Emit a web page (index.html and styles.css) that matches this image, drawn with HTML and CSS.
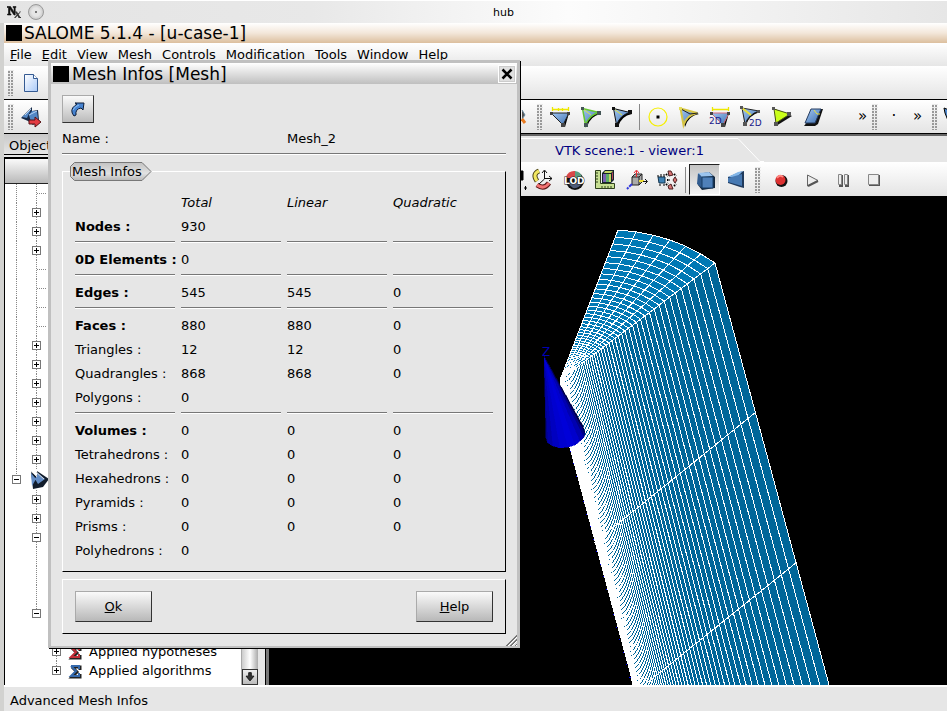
FILE: index.html
```html
<!DOCTYPE html>
<html lang="en">
<head>
<meta charset="utf-8">
<title>SALOME 5.1.4</title>
<link rel="stylesheet" href="styles.css">
</head>
<body>
<div class="session">
  <header class="session-bar">
    <svg class="nx" viewBox="0 0 14 14" aria-hidden="true"><path d="M0 1.5H3.5L7 7V2.5H6V1.5H9V2.5H8.200V10H7L3 4V9H4V10H0.500V9H1.500V2.500H0Z" fill="#111" stroke="#111" stroke-width=".6"/><path d="M7.500 6.500H10L11 8.500L12.500 7.500V6.500H14L11.700 9.500L13.200 12H14V13H11.500L10.500 10.800L8.500 13H7L9.700 9.800L8.500 7.500H7.500Z" fill="#333"/></svg>
    <span class="orb"></span>
    <span class="session-name">hub</span>
  </header>
  <main class="app">
    <h1 class="app-title"><span class="black-box"></span>SALOME 5.1.4 - [u-case-1]</h1>
    <nav class="menu">
      <a href="#"><u>F</u>ile</a><a href="#"><u>E</u>dit</a><a href="#"><u>V</u>iew</a><a href="#">Mesh</a><a href="#">Controls</a><a href="#">Modification</a><a href="#"><u>T</u>ools</a><a href="#"><u>W</u>indow</a><a href="#"><u>H</u>elp</a>
    </nav>
    <div class="toolbar">
      <span class="grip"></span>
      <button class="tool" aria-label="New"><svg viewBox="0 0 24 24"><defs><linearGradient id="paper" x2="1" y2="1"><stop stop-color="#fff"/><stop offset="1" stop-color="#a9c9f8"/></linearGradient></defs><path d="M5.500 3.500H14.500L18.500 7.500V20.500H5.500Z" fill="url(#paper)" stroke="#345a92"/><path d="M14.500 3.500V7.500H18.500" fill="#fff" stroke="#345a92"/></svg></button>
    </div>
    <div class="toolbar mesh-tools">
      <span class="grip"></span>
      <button class="tool" aria-label="Create mesh"><svg viewBox="0 0 24 24"><path d="M2 13L13 2V6L19 5L20 15L14 20L9 16Z" fill="#172a48"/><path d="M3 12L12 4L8 13ZM10 10L13 6H18L19 14L12 17Z" fill="#5387c5"/><path d="M10 10L18 6M6 10L12 4" stroke="#b8d5f5"/><path d="M10 15H16V12L22 17L16 22V19H10Z" fill="#e43c42" stroke="#561316"/></svg></button>
      <div class="shown-tools">
        <span class="clip-icon"><svg viewBox="0 0 6 24"><path d="M1 5L4 10L1 14" fill="#555" stroke="#68899d"/><path d="M1 14L4 18" stroke="#e87a20" stroke-width="3"/></svg></span>
        <span class="grip"></span>
        <button class="tool" aria-label="Length"><svg viewBox="0 0 24 24"><path d="M4 9L21 8L17 22Z" fill="#000"/><path d="M3 8H21L15 20Z" fill="url(#blue)" stroke="#222"/><path d="M4.500 2V6M4 4.500H20M20.500 2V6M10.500 3V6M14.500 3V6" stroke="#eee800" stroke-width="1.300"/><path d="M2 7H5V10H2ZM19 7H22V10H19ZM13 18H17V22H13Z" fill="#444"/></svg></button>
        <button class="tool" aria-label="Free edges"><svg viewBox="0 0 24 24"><path d="M4 4L22 9Q11 11 8 22Z" fill="#000"/><path d="M3.500 3.500L20 7.500Q10 10 6.500 20Z" fill="url(#blue)" stroke="#65c832" stroke-width="1.500"/><path d="M4 4L12 10" stroke="#d9e84a"/><path d="M2 2H5V5H2ZM18 6H22V10H18ZM5 18H9V22H5Z" fill="#455"/></svg></button>
        <button class="tool" aria-label="Free borders"><svg viewBox="0 0 24 24"><path d="M4 4L22 9Q11 11 8 22Z" fill="#000"/><path d="M3.500 3.500L20 7.500Q10 10 6.500 20Z" fill="url(#blue)" stroke="#111"/><path d="M4 4L12 10" stroke="#e3e33b"/><path d="M2 2H5V5H2ZM18 5H22V9H18ZM5 18H9V22H5Z" fill="#111"/></svg></button>
        <span class="rule"></span>
        <button class="tool" aria-label="Free node"><svg viewBox="0 0 24 24"><circle cx="12" cy="12" r="9" fill="none" stroke="#f5ef00" stroke-width="1.200"/><path d="M10.500 10.500H13.500V13.500H10.500Z" fill="#000"/></svg></button>
        <button class="tool" aria-label="Edge connectivity"><svg viewBox="0 0 24 24"><path d="M4 4L22 9Q11 11 8 22Z" fill="#000"/><path d="M3.500 3.500L20 8Q10 10 6.500 20Z" fill="url(#blue)" stroke="#d7c544" stroke-width="2"/><path d="M4 4L13 9L21 8" fill="none" stroke="#222"/><path d="M2 2H5V5H2Z" fill="#e5dd5b"/></svg></button>
        <button class="tool" aria-label="Length 2D"><svg viewBox="0 0 24 24"><path d="M4 9L21 8L17 22Z" fill="#000"/><path d="M3 8H21L15 20Z" fill="url(#blue)" stroke="#d76a7d"/><path d="M4.500 2V6M4 4.500H20M20.500 2V6" stroke="#eee800" stroke-width="1.300"/><path d="M2 7H5V10H2ZM19 7H22V10H19ZM13 18H17V22H13Z" fill="#444"/><text x="1" y="19">2D</text></svg></button>
        <button class="tool" aria-label="Edge connectivity 2D"><svg viewBox="0 0 24 24"><path d="M4 4L21 7Q10 10 7 20Z" fill="#000"/><path d="M3 3L20 6Q10 9 6 19Z" fill="url(#blue)" stroke="#222"/><path d="M3 3L12 10" stroke="#e7df37" stroke-width="2"/><path d="M1 1H4V4H1ZM18 5H21V8H18ZM4 17H8V21H4Z" fill="#555"/><text x="10" y="21">2D</text></svg></button>
        <button class="tool" aria-label="Area"><svg viewBox="0 0 24 24"><path d="M5 4L22 11L6 21Z" fill="#111"/><path d="M4 4L20 9L6 18Z" fill="#caff19" stroke="#4a5511"/><path d="M2 2H5V5H2ZM17 7H21V11H17ZM4 17H8V21H4Z" fill="#555"/></svg></button>
        <button class="tool" aria-label="Minimum angle"><svg viewBox="0 0 24 24"><path d="M10 4H22L17 19L14 21H3L7 16Z" fill="#111"/><path d="M10 4H20L14 18H4Z" fill="url(#blue)" stroke="#263c60"/><path d="M13 5L16 9H19" fill="none" stroke="#eee13f"/></svg></button>
        <button class="more more-wide" aria-label="More controls">»</button>
        <span class="grip"></span>
        <button class="more dot" aria-label="Node">·</button>
        <button class="more" aria-label="More nodes">»</button>
        <span class="grip last-grip"></span>
        <span class="clip-icon end"><svg viewBox="0 0 6 24"><path d="M1 3L6 5V18L2 8Z" fill="#518bd0" stroke="#000"/></svg></span>
      </div>
    </div>
    <div class="work">
      <section class="dock">
        <h2 class="dock-title">Object</h2>
        <div class="tree-frame">
          <div class="tree">
            <div class="tree-head"></div>
            <div id="tree-rows"></div>
          </div>
          <div class="scroll"><span class="scroll-thumb"></span><button class="scroll-down" aria-label="Scroll down"><svg viewBox="0 0 16 16"><path d="M6.500 3H9.500V7H12.500L8 12.500L3.500 7H6.500Z" fill="#333" stroke="#111"/></svg></button></div>
        </div>
      </section>
      <section class="viewer">
        <div class="tabs"><button class="tab">VTK scene:1 - viewer:1</button><svg class="tab-edge" viewBox="0 0 26 24"><path d="M0 .5L22 23.500H26" fill="none" stroke="#fff"/></svg></div>
        <div class="view-tools">
          <span class="clip-icon"><svg viewBox="0 0 6 24"><path d="M0 3H2V12H0ZM3 20H6M4.500 18V22" fill="#000" stroke="#000"/></svg></span>
          <button class="tool" aria-label="Rotate"><svg viewBox="0 0 24 24"><path d="M8 3Q1 6 6 13" fill="none" stroke="#4a4215" stroke-width="5"/><path d="M8 3Q1 6 6 13" fill="none" stroke="#f2e760" stroke-width="3"/><path d="M6 17Q13 22 18 15" fill="none" stroke="#5b1717" stroke-width="5"/><path d="M6 17Q13 22 18 15" fill="none" stroke="#f37373" stroke-width="3"/><path d="M13.500 3V11L8 16M13.500 10.500H21M11 5L13.500 2L16 5M18 8L21 10.500L18 13" fill="none" stroke="#111"/></svg></button>
          <button class="tool" aria-label="Level of detail"><svg viewBox="0 0 24 24"><circle cx="13" cy="13" r="9" fill="#111"/><path d="M4 10A8 8 0 0 1 13 3V10Z" fill="#d94848"/><path d="M13 3A8 8 0 0 1 20 10H13Z" fill="#5a9e81"/><path d="M5 15H20Q17 21 11 20Z" fill="#4e5c79"/><text class="lod" x="2" y="16">LOD</text></svg></button>
          <button class="tool" aria-label="Graduated axes"><svg viewBox="0 0 24 24"><path d="M2.500 2.500H7.500V15.500H21.500V20.500H2.500Z" fill="#c7df92" stroke="#2e401c"/><path d="M3 5H5M3 8H5M3 11H5M3 14H5M9 20V18M12 20V18M15 20V18M18 20V18" stroke="#2e401c"/><path d="M9 5L12 2H21V12L18 15H9Z" fill="#16252c"/><path d="M10 6H13V14H10Z" fill="#795fb1"/><path d="M13 6H16V14H13Z" fill="#5daf64"/><path d="M16 6H18V14H16ZM12 3H20L18 5H11Z" fill="#c3d465"/><path d="M19 5L20 4V11L19 12Z" fill="#b64556"/></svg></button>
          <button class="tool" aria-label="Trihedron"><svg viewBox="0 0 24 24"><path d="M8 9L11 6H18V14L15 17H8Z" fill="#aaa" stroke="#222"/><path d="M8 9H15L18 6M15 9V17" fill="none" stroke="#222"/><path d="M12.500 9V3M10 5L12.500 2L15 5" fill="none" stroke="#e22d34"/><path d="M8 16L3 21" stroke="#3139dd" stroke-width="2" stroke-dasharray="4 1"/><path d="M15 13H20" stroke="#eddd31" stroke-width="2"/><path d="M19 13.500H23M21 11L23.500 13.500L21 16" fill="none" stroke="#111"/></svg></button>
          <button class="tool" aria-label="Pivot"><svg viewBox="0 0 24 24"><path d="M3 9H10V15H4Z" fill="#3e81b4" stroke="#12334b"/><path d="M3 7V9M6 6V9M9 6V9M5 16V18M9 16V18" stroke="#000"/><path d="M13 3L16 3L18 7L14 8ZM13 18L16 16L18 21L14 21ZM20 9L22 12L20 15L18 12Z" fill="#d77373" stroke="#4d2020"/><path d="M11 6L13 8M12 12H15M11 17L13 15M19 6L21 8M19 18L21 16" stroke="#000" stroke-width="2" stroke-dasharray="1.500 1"/></svg></button>
          <span class="rule"></span>
          <button class="tool pressed" aria-label="Parallel mode"><svg viewBox="0 0 24 24"><path d="M5 6L16 4L22 9V20L9 22L5 17Z" fill="#15283e"/><path d="M5 5L9 9V20L4 16Z" fill="#315c8f"/><path d="M5 5L16 4L20 8L9 9Z" fill="#9bc4ee"/><path d="M9 9H20V20H9Z" fill="#4f80b9" stroke="#193d65"/></svg></button>
          <button class="tool" aria-label="Perspective mode"><svg viewBox="0 0 24 24"><path d="M4 9L16 4L20 3V20L16 19L4 15Z" fill="#203a5c"/><path d="M4 9L14 4L19 3L13 9Z" fill="#83b6e8"/><path d="M4 10L18 6V18L4 14Z" fill="#4779b2"/></svg></button>
          <span class="grip"></span>
          <button class="tool" aria-label="Record"><svg viewBox="0 0 24 24"><circle cx="12.500" cy="13" r="6" fill="#111"/><circle cx="11.500" cy="12" r="5" fill="#dc3131"/><path d="M8 10Q11 6 14 9" fill="none" stroke="#ff8a83" stroke-width="2"/></svg></button>
          <button class="tool" aria-label="Play"><svg viewBox="0 0 24 24"><path d="M7.500 7L18 12.500L7.500 18Z" fill="#ededed" stroke="#666"/><path d="M8 18L18 13" stroke="#555" stroke-width="2"/></svg></button>
          <button class="tool" aria-label="Pause"><svg viewBox="0 0 24 24"><path d="M8 7H12V19H8ZM14 7H18V19H14Z" fill="#555"/><path d="M7.500 6.500H10.500V16.500H7.500ZM13.500 6.500H16.500V16.500H13.500Z" fill="#eee" stroke="#888"/></svg></button>
          <button class="tool" aria-label="Stop"><svg viewBox="0 0 24 24"><path d="M7 7H18V18H7Z" fill="#555"/><path d="M6.500 6.500H16.500V16.500H6.500Z" fill="#eee" stroke="#888"/></svg></button>
        </div>
        <svg id="scene" class="scene" viewBox="269 196 678 489" preserveAspectRatio="xMinYMin slice" role="img" aria-label="Mesh"></svg>
      </section>
    </div>
    <footer class="status">Advanced Mesh Infos</footer>
  </main>

  <section class="dialog" role="dialog" aria-labelledby="dialog-name">
    <header class="dialog-title"><span class="black-box"></span><span id="dialog-name">Mesh Infos [Mesh]</span><button class="close" aria-label="Close"><svg viewBox="0 0 16 16"><path d="M3.500 3.500L12.500 12.500M12.500 3.500L3.500 12.500" stroke="#000" stroke-width="2.500"/></svg></button></header>
    <div class="dialog-body">
      <button class="pick" aria-label="Select mesh"><svg viewBox="0 0 24 24"><path d="M8 19Q3 13 9 8.500L11 7L9 6H18L17 13L15 11Q9 12 10 18Z" fill="#4683d0" stroke="#0c1c38"/><path d="M7 13Q9 9 13 8" fill="none" stroke="#92c1f3"/></svg></button>
      <div class="name-row"><span>Name :</span><span>Mesh_2</span></div>
      <div class="infos">
        <h3 class="infos-title"><svg viewBox="0 0 82 20" aria-hidden="true"><defs><linearGradient id="tag" x2="0" y2="1"><stop stop-color="#c2c2c2"/><stop offset=".6" stop-color="#e2e2e2"/><stop offset="1" stop-color="#b8b8b8"/></linearGradient></defs><path d="M4.500 .5H72L81 9.500L72 18.500H4.500L.5 14.500V4.500Z" fill="url(#tag)" stroke="#777"/></svg><span>Mesh Infos</span></h3>
        <table>
          <thead><tr><td></td><th>Total</th><th>Linear</th><th>Quadratic</th></tr></thead>
          <tbody>
            <tr class="ruled"><th>Nodes :</th><td>930</td><td></td><td></td></tr>
            <tr class="ruled"><th>0D Elements :</th><td>0</td><td></td><td></td></tr>
            <tr class="ruled"><th>Edges :</th><td>545</td><td>545</td><td>0</td></tr>
            <tr><th>Faces :</th><td>880</td><td>880</td><td>0</td></tr>
            <tr><td>Triangles :</td><td>12</td><td>12</td><td>0</td></tr>
            <tr><td>Quadrangles :</td><td>868</td><td>868</td><td>0</td></tr>
            <tr class="ruled"><td>Polygons :</td><td>0</td><td></td><td></td></tr>
            <tr><th>Volumes :</th><td>0</td><td>0</td><td>0</td></tr>
            <tr><td>Tetrahedrons :</td><td>0</td><td>0</td><td>0</td></tr>
            <tr><td>Hexahedrons :</td><td>0</td><td>0</td><td>0</td></tr>
            <tr><td>Pyramids :</td><td>0</td><td>0</td><td>0</td></tr>
            <tr><td>Prisms :</td><td>0</td><td>0</td><td>0</td></tr>
            <tr><td>Polyhedrons :</td><td>0</td><td></td><td></td></tr>
          </tbody>
        </table>
      </div>
      <div class="actions"><button class="push"><u>O</u>k</button><button class="push"><u>H</u>elp</button></div>
    </div>
    <span class="resize"></span>
  </section>
</div>
<svg class="defs" aria-hidden="true"><defs><linearGradient id="blue" x2="1" y2="1"><stop stop-color="#a3c8f2"/><stop offset="1" stop-color="#3e6fb0"/></linearGradient></defs></svg>
<script src="scene.js"></script>
</body>
</html>
```
FILE: styles.css
```css
* { box-sizing: border-box; }
body { margin: 0; background: #e6e6e6; color: #000; font: 13px/19px "DejaVu Sans", sans-serif; }
button { margin: 0; padding: 0; border: 0; background: none; color: inherit; font: inherit; }
svg { display: block; }
h1, h2, h3 { margin: 0; font-weight: normal; }
.defs { position: absolute; width: 0; height: 0; }

.session { position: relative; display: flex; flex-direction: column; height: 100vh; overflow: hidden; }
.session-bar { display: grid; grid-template-columns: 21px 20px 1fr; align-items: center; height: 23px; flex: none; padding: 0 0 0 7px; background: linear-gradient(90deg, #e4e4e4 0%, #e8e8e8 33%, #fcfcfc 60%, #e6e6e6 100%); border-top: 1px solid #fff; font-size: 11px; }
.nx { width: 14px; height: 14px; }
.orb { width: 16px; height: 16px; border: 1px solid #999; border-radius: 50%; background: radial-gradient(circle, #777 0 1px, #e6e6e6 1px 4px, #c4c4c4 8px); }
.session-name { justify-self: center; margin-left: 12px; }

.app { display: flex; flex-direction: column; flex: 1; min-height: 0; border-left: 4px solid #d2d2d0; }
.black-box { width: 16px; height: 16px; flex: none; background: #000; }
.app-title { display: flex; align-items: center; gap: 2px; height: 20px; flex: none; padding-left: 2px; font-size: 17px; line-height: 20px; background: linear-gradient(#fff, #f3e7da 50%, #dcbf9e); }
.menu { display: flex; gap: 10px; height: 23px; flex: none; padding: 2px 6px 0; background: linear-gradient(#fff, #e6e6e6); }
.menu a { color: #000; text-decoration: none; }
.toolbar { display: flex; align-items: center; height: 34px; flex: none; padding-left: 3px; background: linear-gradient(#fff, #e4e4e4); border-bottom: 1px solid #000; }
.grip { width: 6px; height: 26px; flex: none; margin: 0 1px; background: repeating-linear-gradient(#e9e9e9 0 1px, transparent 1px 3px), linear-gradient(90deg, #999 0 2px, transparent 2px 3px, #999 3px 5px, transparent 5px); }
.tool { display: grid; place-items: center; width: 31px; height: 31px; flex: none; }
.tool svg { width: 24px; height: 24px; }
.tool text { font-size: 9px; fill: #20208a; }
.tool .lod { font-size: 9px; font-weight: bold; fill: #fff; stroke: #222; stroke-width: 1px; paint-order: stroke; }
.shown-tools { display: flex; align-items: center; margin-left: 475px; }
.clip-icon { width: 6px; height: 24px; flex: none; }
.shown-tools .clip-icon:first-child { margin-right: 9px; }
.rule { width: 1px; height: 26px; flex: none; margin: 0 2px; background: #888; }
.more { width: 17px; flex: none; text-align: center; font-size: 15px; }
.more-wide { margin-left: 26px; }
.dot { width: 30px; }
.shown-tools .last-grip { margin-left: 6px; }
.clip-icon.end { margin-left: 4px; }

.work { display: flex; flex: 1; min-height: 0; }
.dock { display: flex; flex-direction: column; width: 261px; flex: none; }
.dock-title { height: 21px; flex: none; padding: 2px 5px 0; font-size: 13px; background: linear-gradient(#c8c8c8, #e6e6e6); border-bottom: 1px solid #000; }
.tree-frame { display: flex; flex: 1; min-height: 0; margin: 2px 7px 0 0; border: solid #000; border-width: 2px 0 0 1px; background: #fff; }
.tree { flex: 1; overflow: hidden; }
.tree-head { height: 25px; background: linear-gradient(#fafafa, #b9b9b9); border-bottom: 1px solid #222; }
.tree-row { display: flex; align-items: center; height: 19px; padding-left: 1px; white-space: nowrap; }
.tree-row.tall { height: 21px; }
.branch { display: grid; place-items: center; width: 20px; height: 100%; flex: none; }
.branch.line { background: repeating-linear-gradient(#888 0 1px, transparent 1px 2px) 10px 0 / 1px 100% no-repeat; }
.branch.line.half { background-size: 1px 50%; }
.branch.stub::after { content: ""; width: 9px; height: 1px; justify-self: end; background: repeating-linear-gradient(90deg, #888 0 1px, transparent 1px 2px); }
.toggle { width: 9px; height: 9px; margin-left: 1px; border: 1px solid #777; background: #fff; }
.toggle svg { width: 7px; height: 7px; }
.tree-icon { width: 16px; height: 16px; margin-left: 2px; }
.tree-icon.big { width: 20px; height: 20px; margin-left: 4px; }
.tree-label { margin-left: 5px; }
.scroll { display: flex; flex-direction: column; width: 17px; flex: none; border-left: 1px solid #aaa; }
.scroll-thumb { flex: 1; background: linear-gradient(90deg, #ccc, #fff, #aaa); }
.scroll-down { width: 16px; height: 16px; border: 1px solid #333; background: linear-gradient(#eee, #bbb); }
.scroll-down svg { width: 14px; height: 14px; }

.viewer { display: flex; flex-direction: column; flex: 1; min-width: 0; border-left: 1px solid #000; box-shadow: inset 3px 0 #777; padding-left: 3px; }
.tabs { display: flex; height: 29px; flex: none; padding: 2px 0 0 252px; border-top: 2px solid #666; border-bottom: 1px solid #fff; color: #000080; }
.tab { width: 217px; border-top: 1px solid #fff; text-align: center; }
.tab-edge { width: 26px; height: 24px; }
.view-tools { display: flex; align-items: center; height: 33px; flex: none; padding-left: 252px; background: linear-gradient(#fff, #e4e4e4); }
.view-tools .rule { margin: 0 3px; }
.view-tools .grip { margin: 0 4px; }
.pressed { border: 1px solid; border-color: #222 #fff #fff #222; background: linear-gradient(#c4c4c4, #f4f4f4); }
.scene { flex: 1; width: 100%; min-height: 0; background: #000; }
.scene text { font: 12px "DejaVu Sans", sans-serif; fill: #0000b4; }
.status { height: 26px; flex: none; padding: 4px 6px; border-top: 2px solid #fff; }

.dialog { position: absolute; left: 48px; top: 60px; width: 472px; border: 3px solid #c0c0c0; border-bottom-width: 2px; background: #e6e6e6; box-shadow: 1px 1px #000; }
.dialog-title { display: flex; align-items: center; gap: 3px; height: 21px; padding: 0 1px 0 2px; font-size: 17px; line-height: 20px; background: linear-gradient(#fff, #bfbfbf); }
.close { display: grid; place-items: center; width: 18px; height: 18px; margin-left: auto; border: 1px solid #fff; box-shadow: inset 0 0 0 1px #ccc; background: #e0e0e0; }
.close svg { width: 16px; height: 16px; }
.dialog-body { padding: 11px 11px 12px; }
.pick { display: grid; place-items: center; width: 32px; height: 28px; border: 1px solid #aaa; border-right-color: #333; border-bottom-color: #333; background: linear-gradient(#fafafa, #bbb); }
.pick svg { width: 24px; height: 24px; }
.name-row { display: grid; grid-template-columns: 225px 1fr; height: 31px; padding-top: 6px; border-bottom: 1px solid #777; box-shadow: 0 1px #fff; }
.infos { position: relative; margin-top: 17px; padding: 19px 6px 8px; border: 1px solid #fff; border-right-color: #000; border-bottom-color: #000; }
.infos-title { position: absolute; left: 7px; top: -10px; font-size: 13px; }
.infos-title svg { width: 82px; height: 20px; }
.infos-title span { position: absolute; left: 2px; top: 0; white-space: nowrap; }
table { width: 430px; table-layout: fixed; border-collapse: separate; border-spacing: 6px 0; }
th, td { height: 24px; padding: 0; text-align: left; vertical-align: top; white-space: nowrap; line-height: 24px; }
thead th { font-weight: normal; font-style: italic; }
.ruled th, .ruled td { height: 33px; background: linear-gradient(#777, #777) 0 26px / 100% 1px no-repeat, linear-gradient(#fff, #fff) 0 27px / 100% 1px no-repeat; }
.actions { display: flex; justify-content: space-between; margin-top: 7px; padding: 11px 12px; border: 1px solid #fff; border-right-color: #000; border-bottom-color: #000; }
.push { width: 77px; height: 31px; border: 1px solid #aaa; border-right-color: #333; border-bottom-color: #333; background: linear-gradient(#fafafa, #b8b8b8); }
.resize { position: absolute; right: 0; bottom: 0; width: 12px; height: 12px; background: repeating-linear-gradient(135deg, #777 0 1px, #fff 1px 2px, #ddd 2px 3px); clip-path: polygon(100% 0, 100% 100%, 0 100%); }
```
FILE: scene.js
```js
(() => {
  // Object tree: each row lists its branch cells, then an optional icon and label.
  const rows = [];
  const add = (count, cells, extra = {}) => { for (let i = 0; i < count; i++) rows.push({ cells, ...extra }); };
  add(1, ['line', 'line stub']);
  add(3, ['line', 'line +']);
  add(4, ['line', 'line stub']);
  add(7, ['line', 'line +']);
  add(1, ['line half -'], { icon: 'mesh', tall: true });
  add(2, ['', 'line +']);
  add(1, ['', 'line -']);
  add(3, ['', 'line']);
  add(1, ['', 'line half -']);
  add(1, ['', '']);
  add(1, ['', '', 'line +'], { icon: '#c32e38', label: 'Applied hypotheses' });
  add(1, ['', '', 'line half +'], { icon: '#3569ac', label: 'Applied algorithms' });

  const meshIcon = '<svg class="tree-icon big" viewBox="0 0 20 20"><path d="M1 2L8 7L7 1L19 9L13 17L3 19Z" fill="#111c2b"/><path d="M1 3L6 9L2 16ZM8 3L15 9L8 14L5 9Z" fill="#628cc5"/><path d="M1 1L7 7M6 2L14 9" stroke="#ddd"/></svg>';
  const sigma = c => `<svg class="tree-icon" viewBox="0 0 16 16"><path d="M4 4H12V7M4 4L9 9L4 14H12V11" fill="none" stroke="#222" stroke-width="3"/><path d="M3 3H11V6M3 3L8 8L3 13H11V10" fill="none" stroke="${c}" stroke-width="2"/></svg>`;
  document.getElementById('tree-rows').innerHTML = rows.map(row => {
    const cells = row.cells.map(c => {
      const sign = c.match(/[+-]$/);
      const box = sign ? `<span class="toggle"><svg viewBox="0 0 7 7"><path d="M1 3.5H6${sign[0] === '+' ? 'M3.5 1V6' : ''}" stroke="#000"/></svg></span>` : '';
      return `<span class="branch ${c.replace(/[+-]$/, '')}">${box}</span>`;
    }).join('');
    const icon = !row.icon ? '' : row.icon === 'mesh' ? meshIcon : sigma(row.icon);
    return `<div class="tree-row${row.tall ? ' tall' : ''}">${cells}${icon}${row.label ? `<span class="tree-label">${row.label}</span>` : ''}</div>`;
  }).join('');

  // Mesh wedge: a fan on top and one extruded face, graded towards the apex.
  const apex = [560, 380], left = [618, 230], ctrl = [673.5, 233.5], right = [715, 263];
  const arc = t => [0, 1].map(i => (1 - t) ** 2 * left[i] + 2 * t * (1 - t) * ctrl[i] + t * t * right[i]);
  const at = (s, t) => arc(t).map((v, i) => apex[i] + s * (v - apex[i]));
  const pt = p => p.map(v => v.toFixed(1)).join(' ');
  const n = 54, r = 0.957, total = (1 - r ** n) / (1 - r);
  const scales = Array.from({ length: n + 1 }, (_, i) => 1 - ((1 - r ** i) / (1 - r)) / total);
  const curve = s => 'M' + Array.from({ length: 7 }, (_, k) => pt(at(s, k / 6))).join('L');
  const down = s => { const p = at(s, 1); return [p[0] + 81 + 42 * s, p[1] + 338 + 117 * s]; };
  let fan = '', face = '';
  scales.forEach(s => { fan += curve(s); face += `M${pt(at(s, 1))}L${pt(down(s))}`; });
  for (let k = 0; k <= 6; k++) fan += `M${pt(apex)}L${pt(at(1, k / 6))}`;
  face += 'M756 412L594 543M797 562L632 695';
  let cone = '';
  const shades = ['#00008c', '#0000a8', '#0000c0', '#0000d0', '#0000d8', '#0000cc', '#0000b0', '#000088', '#00004a'];
  const base = [[546, 438], [548, 443], [553, 446], [560, 448], [568, 447], [575, 445], [580, 441], [584, 437], [585, 433], [583, 426]];
  shades.forEach((c, i) => { cone += `<path d="M544 356L${pt(base[i])}L${pt(base[i + 1])}Z" fill="${c}" stroke="${c}" stroke-width=".5"/>`; });
  document.getElementById('scene').innerHTML =
    `<g shape-rendering="crispEdges"><path d="M560 380L715 263L838 718L641 718Z" fill="#006699"/>` +
    `<path d="${curve(1)}L560 380Z" fill="#0078b4"/><path d="M560 380V412L633 685H638L602 541L578 448Z" fill="#fff"/>` +
    `<path d="${face}${fan}" fill="none" stroke="#fff"/>` +
    `<path d="M560 413L632 685" stroke="#0000ff" stroke-dasharray="1 12"/>${cone}</g><text x="542" y="356">Z</text>`;
})();
```
